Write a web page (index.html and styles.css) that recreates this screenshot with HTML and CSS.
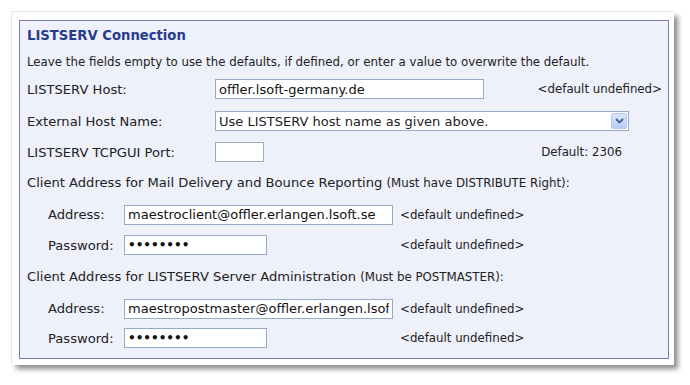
FILE: index.html
```html
<!DOCTYPE html>
<html>
<head>
<meta charset="utf-8">
<link rel="stylesheet" href="styles.css">
</head>
<body>
<div class="frame">
  <div class="panel">
    <div class="row r-title"><h1 class="title">LISTSERV Connection</h1></div>
    <div class="row r-leave"><span class="small">Leave the fields empty to use the defaults, if defined, or enter a value to overwrite the default.</span></div>
    <div class="row r-host">
      <span class="label">LISTSERV Host:</span>
      <input class="field host" type="text" value="offler.lsoft-germany.de">
      <span class="small def-right">&lt;default undefined&gt;</span>
    </div>
    <div class="row r-ext">
      <span class="label">External Host Name:</span>
      <div class="select">
        <span class="select-text">Use LISTSERV host name as given above.</span>
        <span class="select-btn"><svg width="9" height="6" viewBox="0 0 9 6"><path d="M1 1 L4.5 4.5 L8 1" fill="none" stroke="#4d6185" stroke-width="1.8"/></svg></span>
      </div>
    </div>
    <div class="row r-port">
      <span class="label">LISTSERV TCPGUI Port:</span>
      <input class="field port" type="text" value="">
      <span class="small def-right port-def">Default: 2306</span>
    </div>
    <div class="row r-client">
      <span class="text">Client Address for Mail Delivery and Bounce Reporting <span class="small">(Must have DISTRIBUTE Right):</span></span>
    </div>
    <div class="row sub r-addr">
      <span class="sublabel">Address:</span>
      <input class="field addr" type="text" value="maestroclient@offler.erlangen.lsoft.se">
      <span class="small def-sub">&lt;default undefined&gt;</span>
    </div>
    <div class="row sub r-pwd">
      <span class="sublabel">Password:</span>
      <input class="field pwd" type="password" value="xxxxxxxx">
      <span class="small def-sub">&lt;default undefined&gt;</span>
    </div>
    <div class="row r-client2">
      <span class="text">Client Address for LISTSERV Server Administration <span class="small">(Must be POSTMASTER):</span></span>
    </div>
    <div class="row sub r-addr2">
      <span class="sublabel">Address:</span>
      <input class="field addr" type="text" value="maestropostmaster@offler.erlangen.lsoft.se">
      <span class="small def-sub">&lt;default undefined&gt;</span>
    </div>
    <div class="row sub r-pwd2">
      <span class="sublabel">Password:</span>
      <input class="field pwd" type="password" value="xxxxxxxx">
      <span class="small def-sub">&lt;default undefined&gt;</span>
    </div>
  </div>
</div>
</body>
</html>
```
FILE: styles.css
```css
html, body {
  margin: 0;
  padding: 0;
  background: #ffffff;
}
body {
  font-family: "DejaVu Sans", Verdana, sans-serif;
  color: #222222;
  min-height: 385px;
}
.frame {
  margin: 12px 0 0 12px;
  width: 650px;
  padding: 8px 5px 6px 7px;
  background: #ffffff;
  box-shadow: -1px -1px 0 #e8e8e8, 4px 4px 5px rgba(0, 0, 0, 0.45);
}
.panel {
  border: 1px solid #7b7bb5;
  background: #eef0fa;
  padding: 0 6px 6px 7px;
  display: flex;
  flex-direction: column;
}
.row {
  display: flex;
  align-items: center;
}
.r-title { height: 29px; }
.r-leave { height: 24px; }
.r-host { height: 30px; }
.r-ext { height: 34px; }
.r-port { height: 28px; }
.r-client { height: 32px; }
.r-addr { height: 33px; }
.r-pwd { height: 28px; }
.r-client2 { height: 34px; }
.r-addr2 { height: 31px; }
.r-pwd2 { height: 28px; }
.title {
  margin: 0;
  font-size: 13.2px;
  font-weight: bold;
  color: #283c8c;
}
.small {
  font-size: 11.8px;
}
.label {
  width: 188px;
  font-size: 13.1px;
  flex: none;
}
.text {
  font-size: 13.1px;
}
.field {
  box-sizing: border-box;
  height: 20px;
  margin: 0;
  padding: 0 3px;
  border: 1px solid #98abc6;
  background: #ffffff;
  font-family: "DejaVu Sans", Verdana, sans-serif;
  font-size: 13px;
  color: #111111;
  outline: none;
  flex: none;
}
.host { width: 269px; }
.port { width: 49px; }
.def-right {
  margin-left: auto;
}
.port-def {
  margin-right: 40px;
}
.select {
  box-sizing: border-box;
  width: 414px;
  height: 20px;
  border: 1px solid #98abc6;
  background: #ffffff;
  display: flex;
  align-items: center;
  justify-content: space-between;
  padding: 0 1px 0 3px;
  font-size: 13px;
}
.select-btn {
  width: 16px;
  height: 16px;
  border-radius: 2px;
  background: linear-gradient(#dbe6fd, #b9cdf8);
  border: 1px solid #b7c9f0;
  box-sizing: border-box;
  display: flex;
  align-items: center;
  justify-content: center;
}
.sub {
  padding-left: 21px;
}
.sublabel {
  width: 76px;
  flex: none;
  font-size: 13.1px;
}
.addr { width: 269px; }
.pwd { width: 143px; font-size: 12px; font-weight: bold; }
.def-sub {
  margin-left: 7px;
}
.r-pwd .def-sub, .r-pwd2 .def-sub {
  margin-left: 133px;
}
```
